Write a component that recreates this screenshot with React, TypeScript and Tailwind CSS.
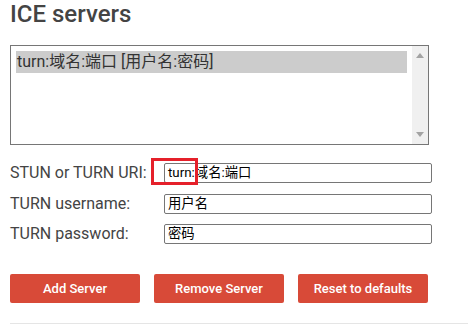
import React from "react";

const font = { fontFamily: 'Roboto, "Noto Sans CJK SC", sans-serif' };

function Field({ label, value }: { label: string; value: string }) {
  return (
    <div className="flex items-center h-[20px]">
      <div className="w-[154px] text-[16px] leading-[20px] text-[#444]">{label}</div>
      <div className="w-[268px] h-[20px] border border-[#767676] rounded-[2px] bg-white pl-[3px] text-[13.33px] leading-[18px] text-black">
        {value}
      </div>
    </div>
  );
}

export default function App() {
  return (
    <div className="relative w-[468px] h-[328px] bg-white overflow-hidden pl-[10px]" style={font}>
      <h2 className="text-[24px] leading-[28px] font-medium text-[#444]">ICE servers</h2>

      <div className="mt-[17px] w-[419px] h-[100px] border border-[#767676] flex">
        <div className="flex-1 p-[5px]">
          <div className="h-[22px] bg-[#cccccc] pl-[1px] text-[16px] leading-[22px] text-[#333]">
            turn:域名:端口 [用户名:密码]
          </div>
        </div>
        <div className="w-[16px] bg-[#f0f0f0] flex flex-col items-center justify-between py-[7px]">
          <svg width="8" height="5" viewBox="0 0 8 5"><path d="M0 5 L4 0 L8 5 Z" fill="#a3a3a3" /></svg>
          <svg width="8" height="5" viewBox="0 0 8 5"><path d="M0 0 L4 5 L8 0 Z" fill="#a3a3a3" /></svg>
        </div>
      </div>

      <div className="mt-[18px] flex flex-col gap-[10.5px]">
        <Field label="STUN or TURN URI:" value="turn:域名:端口" />
        <Field label="TURN username:" value="用户名" />
        <Field label="TURN password:" value="密码" />
      </div>

      <div className="mt-[30px] flex gap-[14px]">
        {["Add Server", "Remove Server", "Reset to defaults"].map((t) => (
          <button
            key={t}
            className="w-[130px] h-[29px] rounded-[2px] bg-[#d84a38] text-white text-[13px] font-medium"
          >
            {t}
          </button>
        ))}
      </div>

      <div className="mt-[20px] border-t border-[#e5e5e5]" />

      <div className="absolute left-[151px] top-[158px] w-[47px] h-[27px] border-[3px] border-[#e5202a]" />
    </div>
  );
}
